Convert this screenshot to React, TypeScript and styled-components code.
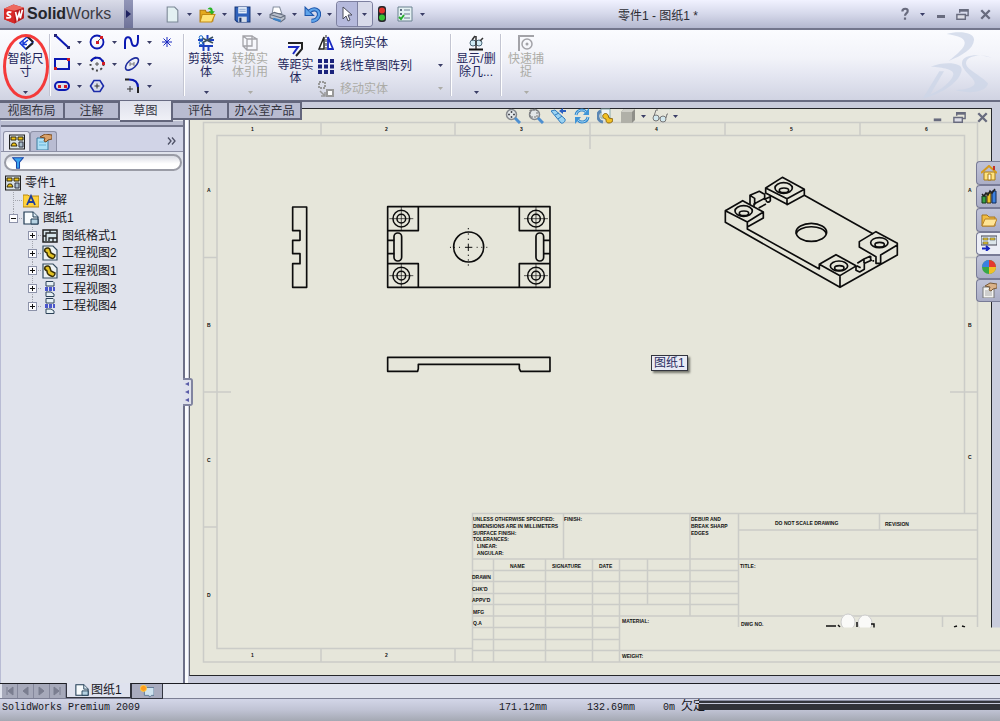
import React from "react";
import styled, { createGlobalStyle } from "styled-components";

const navy = "#23265a";
const cjk = `"Liberation Sans", "Noto Sans CJK SC", sans-serif`;

const GlobalStyle = createGlobalStyle`
  * { box-sizing: border-box; }
  body { margin: 0; background: #cdd0e0; font: 12px/14px ${cjk}; color: #16161c; }
  button { font: inherit; color: inherit; background: none; border: 0; padding: 0; margin: 0; }
  ul { list-style: none; margin: 0; padding: 0; }
  svg { display: block; }
`;

/* ---------- shell ---------- */

const Shell = styled.div`
  display: flex;
  flex-direction: column;
  min-height: 100vh;
  overflow: hidden;
`;

const TitleBar = styled.header`
  display: flex;
  align-items: center;
  height: 30px;
  background: linear-gradient(#f1f2ff, #d5d8ea 50%, #b4b8cf);
  border-bottom: 2px solid #73768c;
`;

const Brand = styled.div`
  display: flex;
  align-items: center;
  width: 124px;
  height: 28px;
  padding-left: 3px;
  gap: 2px;
  background: linear-gradient(#d9dbe8, #a9adc4);
  font-size: 16px;
  line-height: 20px;
  color: #3c3c44;
  b { color: #25252b; }
`;

const BrandToggle = styled.button`
  display: grid;
  place-items: center;
  width: 9px;
  height: 28px;
  background: linear-gradient(#9296b8, #6f7399);
  margin-right: 29px;
`;

const ToolButton = styled.button<{ $w?: number }>`
  display: grid;
  place-items: center;
  width: ${(p) => p.$w ?? 20}px;
  height: 22px;
  flex: none;
`;

const SelectFrame = styled.div`
  display: flex;
  height: 24px;
  width: 35px;
  align-items: center;
  border-radius: 3px;
  box-shadow: 0 0 0 1px #7d80a0;
  background: linear-gradient(90deg, #b5b9dc 20px, #7d80a0 20px, #7d80a0 21px, #d9dbea 21px);
`;

const DocTitle = styled.h1`
  flex: 1;
  margin: 0;
  padding: 3px 6px 0 0;
  text-align: center;
  font: 12px/16px ${cjk};
  color: #2c2c33;
`;

const Controls = styled.div`
  display: flex;
  align-items: center;
  padding-right: 4px;
`;

/* ---------- ribbon ---------- */

const Ribbon = styled.div`
  position: relative;
  display: flex;
  height: 72px;
  padding-left: 2px;
  background: linear-gradient(#fbfcff, #f2f3f9 40%, #e4e6f1 65%, #d0d3e2);
  border-bottom: 2px solid #686b82;
`;

const Divider = styled.div`
  width: 2px;
  margin: 4px 0;
  background: linear-gradient(90deg, #c3c5d2 1px, #fff 1px);
`;

const BigTool = styled.button<{ $w: number; $low?: boolean; $off?: boolean }>`
  position: relative;
  display: flex;
  flex-direction: column;
  align-items: center;
  width: ${(p) => p.$w}px;
  height: 68px;
  padding-top: ${(p) => (p.$low ? 11 : 5)}px;
  line-height: 13px;
  color: ${(p) => (p.$off ? "#acaca6" : navy)};
  > span { width: 40px; margin-top: 2px; }
  > span + svg { margin-top: auto; margin-bottom: 4px; }
`;

const HighlightRing = styled.i`
  position: absolute;
  inset: 4px 0 -1px 1px;
  border: 3px solid #f43a3a;
  border-radius: 50%;
`;

const SketchGrid = styled.div`
  display: grid;
  grid-template-columns: repeat(3, 20px 15px) 26px;
  grid-template-rows: repeat(3, 22px);
  padding: 1px 0 0 1px;
`;

const StackTools = styled.div`
  display: grid;
  grid-template-columns: 22px 90px 20px;
  grid-template-rows: repeat(3, 23px);
  align-items: center;
  padding: 1px 0 0;
`;

const StackLabel = styled.button<{ $off?: boolean }>`
  text-align: left;
  color: ${(p) => (p.$off ? "#acaca6" : navy)};
`;

const RibbonLogo = styled.div`
  position: absolute;
  right: 8px;
  top: 0;
`;

/* ---------- main region ---------- */

const Main = styled.main`
  position: relative;
  display: flex;
  flex: 1;
  background: #c9ccdc;
`;

const CommandTabs = styled.nav`
  position: absolute;
  z-index: 2;
  left: 0;
  top: -1px;
  display: flex;
  align-items: flex-start;
`;

const CommandTab = styled.button<{ $w: number; $active?: boolean }>`
  width: ${(p) => p.$w}px;
  height: ${(p) => (p.$active ? 21 : 19)}px;
  border: 2px solid #63667c;
  border-left-width: 0;
  border-top-width: ${(p) => (p.$active ? 0 : 2)}px;
  background: ${(p) => (p.$active ? "linear-gradient(#dfe1ec, #eff0f6)" : "#b8bbd0")};
  color: #33343f;
`;

const Panel = styled.aside`
  display: flex;
  flex-direction: column;
  width: 185px;
  padding-top: 19px;
  border-right: 2px solid #6d7088;
  border-left: 1px solid #b9bcd4;
  background: #e0e3ec;
`;

const PanelHeader = styled.div`
  display: flex;
  align-items: flex-end;
  height: 31px;
  padding: 0 6px 0 2px;
  background: linear-gradient(#b9bcd0 4px, #73768c 4px, #73768c 6px, #d1d4e7 6px);
  border-bottom: 1px solid #8d90a6;
`;

const PanelTab = styled.button<{ $active?: boolean }>`
  display: grid;
  place-items: center;
  width: 27px;
  height: 20px;
  border: 1px solid #8d90a6;
  border-bottom: 0;
  border-radius: 3px 3px 0 0;
  background: ${(p) => (p.$active ? "#e8e9f2" : "#b9bcd2")};
`;

const Chevron = styled.button`
  display: grid;
  place-items: center;
  width: 11px;
  height: 20px;
  margin-left: auto;
`;

const Filter = styled.label`
  display: flex;
  align-items: center;
  height: 17px;
  margin: 2px 1px 3px 3px;
  padding-left: 6px;
  gap: 4px;
  border: 2px solid #9a9ca6;
  border-radius: 9px;
  background: linear-gradient(#d9dbe4, #fff 60%);
  input { flex: 1; min-width: 0; border: 0; background: none; outline: 0; font: inherit; height: 12px; padding: 0; }
`;

const Tree = styled.ul`
  display: grid;
  grid-template-rows: repeat(8, 1fr);
  height: 141px;
`;

const TreeRow = styled.li<{ $level: number }>`
  display: flex;
  align-items: stretch;
  padding-left: ${(p) => (p.$level === 0 ? 4 : p.$level === 1 ? 3 : 22)}px;
  white-space: nowrap;
  > svg { align-self: center; margin-right: 4px; }
  > span { align-self: center; }
`;

const Guide = styled.div<{ $last?: boolean }>`
  display: grid;
  place-items: center;
  width: 19px;
  background:
    repeating-linear-gradient(#a3a5ad 0 1px, transparent 1px 2px) 9px 0 / 1px ${(p) => (p.$last ? "50%" : "100%")} no-repeat,
    repeating-linear-gradient(90deg, #a3a5ad 0 1px, transparent 1px 2px) 9px 50% / 10px 1px no-repeat;
`;

const Expander = styled.button`
  display: grid;
  place-items: center;
  width: 9px;
  height: 9px;
  border: 1px solid #8d93aa;
  background: #fbfbfd;
`;

const Splitter = styled.div`
  position: relative;
  width: 4px;
  background: linear-gradient(90deg, #fafbfd 3px, #c9ccdc 3px);
`;

const SplitHandle = styled.button`
  position: absolute;
  z-index: 1;
  top: 276px;
  left: -2px;
  display: grid;
  place-items: center;
  width: 10px;
  height: 28px;
  border: 2px solid #8184a0;
  border-left: 0;
  border-radius: 0 3px 3px 0;
  background: #dfe1ec;
`;

const Workspace = styled.section`
  display: flex;
  flex: 1;
  min-width: 0;
  padding: 6px 8px 7px 0;
`;

const Sheet = styled.div`
  position: relative;
  flex: 1;
  min-width: 0;
  border: 1px solid #26272b;
  border-left-color: #60626c;
  background: #e6e6da;
`;

const ViewBar = styled.div`
  position: absolute;
  inset: -4px 0 auto;
  display: flex;
  align-items: center;
  justify-content: center;
`;

const SheetControls = styled.div`
  position: absolute;
  top: -3px;
  right: -2px;
  display: flex;
`;

const SheetTip = styled.div`
  position: absolute;
  left: 461px;
  top: 246px;
  padding: 0 2px;
  border: 1px solid #33353f;
  background: #e9ebf5;
  color: #2b2d60;
  line-height: 14px;
  box-shadow: 2px 2px 2px #77786f;
`;

const TaskPane = styled.nav`
  position: absolute;
  z-index: 2;
  right: 0;
  top: 59px;
  display: grid;
  grid-template-rows: repeat(6, 1fr);
  height: 141px;
  width: 24px;
`;

const TaskButton = styled.button<{ $active?: boolean }>`
  display: grid;
  place-items: center;
  border: 1px solid #787b96;
  border-right: 0;
  border-radius: 4px 0 0 4px;
  background: ${(p) => (p.$active ? "#eceef6" : "linear-gradient(#c0c3d8, #abaec6)")};
`;

/* ---------- footer ---------- */

const SheetTabs = styled.nav`
  display: flex;
  height: 16px;
  padding-left: 2px;
  border-top: 1px solid #1d1e23;
  border-bottom: 1px solid #7c7f94;
  background: #e1e4ee;
`;

const NavButton = styled.button`
  display: grid;
  place-items: center;
  width: 16px;
  background: #a6a9ba;
  border-right: 1px solid #85889c;
`;

const SheetTab = styled.button<{ $active?: boolean }>`
  display: flex;
  align-items: center;
  gap: 2px;
  height: 15px;
  padding: 0 8px;
  border: 1px solid #33353f;
  border-top: 0;
  background: ${(p) => (p.$active ? "#dfe2ee" : "#a9acbf")};
  margin-top: ${(p) => (p.$active ? -1 : 0)}px;
`;

const StatusBar = styled.footer`
  position: relative;
  display: flex;
  height: 22px;
  padding: 1px 0 0 2px;
  background: linear-gradient(#d3d6e8, #c0c3d4 50%, #a4a8b3);
  font: 10px/15px "Liberation Mono", "Noto Sans CJK SC", monospace;
  white-space: pre;
`;

const StatusGroup = styled.div`
  display: flex;
  margin-left: auto;
  width: 501px;
`;

const StatusCell = styled.span<{ $w: number }>`
  width: ${(p) => p.$w}px;
  big { font-size: 12px; }
`;

const DarkStrip = styled.div`
  position: absolute;
  right: 0;
  top: 1px;
  width: 301px;
  height: 10px;
  background: linear-gradient(#8c90a4 1px, #33353c 1px, #33353c 3px, #c4c8d8 3px, #c4c8d8 4px, #303238 4px);
`;

/* ---------- icons ---------- */

const Caret = ({ c = "#3a3d66" }: { c?: string }) => (
  <svg width="5" height="3" viewBox="0 0 5 3"><path d="M0 0h5L2.500 3z" fill={c} /></svg>
);

const shapes: Record<string, React.ReactNode> = {
  page: <path d="M3 1h7l3 3v11H3z" fill="#e3f0f2" stroke="#7b8795" />,
  open: <><path d="M1 4h5l1 2h6v8H1z" fill="#e5a91e" stroke="#b47b0c" /><path d="M3 8h12l-3 7H1z" fill="#ffe276" stroke="#c38a12" /><path d="M8 3c3-3 5-1 5 2h2l-3 3-3-3h2c0-2-1-2-3-2z" fill="#28b424" /></>,
  save: <><path d="M1 1h14v14H3l-2-2z" fill="#2f62bb" stroke="#173778" /><path d="M4 1h8v6H4z" fill="#e8f1fb" /><path d="M5 3h6M5 5h6" stroke="#8ca7cd" /><path d="M4 10h8v5H4z" fill="#d5dce8" /><path d="M5 11h2v4H5z" fill="#183469" /></>,
  print: <><path d="M3 7l1-6h6l2 6z" fill="#fff" stroke="#8690a0" /><path d="M1 8l4-2 10 3v3l-4 3-10-4z" fill="#b9c0cc" stroke="#636c7d" /><path d="M1 8l10 3 4-2" stroke="#636c7d" fill="none" /><path d="M4 12l7 2" stroke="#3b82c9" strokeWidth="2" /></>,
  undo: <><path d="M5 5c5-4 10-1 9 4-1 3-3 5-7 5" fill="none" stroke="#1e57ad" strokeWidth="4" /><path d="M1 1v8h8z" fill="#5fa4ea" stroke="#1e57ad" /><path d="M5 5c5-4 10-1 9 4-1 3-3 5-7 5" fill="none" stroke="#5fa4ea" strokeWidth="2" /></>,
  cursor: <path d="M4 1v12l3-3 2 5 2-1-2-5h4z" fill="#fff" stroke="#4b4d5c" />,
  traffic: <><rect x="4" y="0" width="8" height="16" rx="3" fill="#27282b" /><circle cx="8" cy="4.500" r="3" fill="#e3322b" /><circle cx="8" cy="11.500" r="3" fill="#35c231" /></>,
  list: <><path d="M1 1h14v14H1z" fill="#e4f1f2" stroke="#6b8190" /><path d="M7 4h6M7 8h6M7 12h6" stroke="#6b7d90" /><path d="M3 4h2M3 8h2" stroke="#5b6d80" strokeWidth="2" /><path d="M2 11l2 2 3-4" fill="none" stroke="#25ad2b" strokeWidth="2" /></>,
  help: <path d="M5 5c0-4 7-4 6 0 0 2-3 2-3 5M8 12v2.500" fill="none" stroke="#686b7e" strokeWidth="2.500" />,
  min: <path d="M4 10.500h8" stroke="#686b7e" strokeWidth="3" />,
  restore: <><path d="M5 6V3h9v6h-3" fill="none" stroke="#686b7e" strokeWidth="1.500" /><path d="M5 4h9" stroke="#686b7e" strokeWidth="2" /><path d="M2 8h9v5H2z" fill="#dcdde6" stroke="#686b7e" strokeWidth="1.500" /></>,
  close: <path d="M3.500 3.500l9 9m0-9l-9 9" stroke="#686b7e" strokeWidth="2.500" />,
  dim: <><path d="M2 8l7-6 6 5-7 7z" fill="#fff" stroke="#1539d8" strokeWidth="1.600" /><path d="M9 1l6 6" stroke="#222" strokeWidth="2" /><path d="M5 9l5-4M5 6v3.500h4" stroke="#1539d8" strokeWidth="1.500" fill="none" /><path d="M8 14l7-6" stroke="#222" strokeWidth="2" /></>,
  line: <><path d="M1 1l14 13" stroke="#0a18b2" strokeWidth="2" /><path d="M0 0h3v3H0zM13 12h3v3h-3z" fill="#23247a" /></>,
  circle: <><circle cx="8" cy="8" r="6.500" fill="none" stroke="#0a18b2" strokeWidth="1.800" /><path d="M8 8l4-4" stroke="#555" /><path d="M7 7h3v3H7zM11 2h3v3h-3z" fill="#d01c26" /></>,
  spline: <path d="M1 15V8c0-6 5-6 6-2s1 6 4 6 3-4 3-7V1" fill="none" stroke="#0a18b2" strokeWidth="2" />,
  star: <path d="M8 3v10M3 8h10M4.500 4.500l7 7m0-7l-7 7" stroke="#1928c0" />,
  rect: <><path d="M1 3h14v10H1z" fill="none" stroke="#0a18b2" strokeWidth="2" /><path d="M13 2h3v3h-3zM0 11h3v3H0z" fill="#d01c26" /></>,
  arc: <><circle cx="8" cy="8" r="6.500" fill="none" stroke="#444" strokeWidth="2" strokeDasharray="2 2.500" /><path d="M2 5c3-5 10-4 12 1" fill="none" stroke="#0a18b2" strokeWidth="2" /><path d="M6 8h4M8 6v4" stroke="#555" /><path d="M13 6h3v3h-3z" fill="#d01c26" /></>,
  ellipse: <><ellipse cx="8" cy="8" rx="8" ry="4" transform="rotate(-42 8 8)" fill="none" stroke="#1e2d9e" strokeWidth="1.600" /><path d="M6 6v4M6 8h4M10 6v4" stroke="#777" /></>,
  slot: <><rect x="1" y="4" width="14" height="8" rx="4" fill="none" stroke="#0a18b2" strokeWidth="2" /><path d="M4 7h3v3H4zM10 7h3v3h-3z" fill="#d01c26" /></>,
  hex: <><path d="M5 2.500h6l3.500 5.500-3.500 5.500H5L1.500 8z" fill="none" stroke="#1a2aa8" strokeWidth="1.600" /><path d="M5.500 8h5M8 5.500v5" stroke="#333" /></>,
  fillet: <><path d="M1 1.500h4" stroke="#222" strokeWidth="2" /><path d="M5 1.500c7 0 9 4 9 8" fill="none" stroke="#0a18b2" strokeWidth="2" /><path d="M14 9v6" stroke="#222" strokeWidth="2" /><path d="M3 11h6M6 8v6" stroke="#333" /></>,
  trim: <><path d="M0 5h5M11 5h5M1 11h14M5.500 8v8M10.500 11v5M9.500 0v4" stroke="#1c40c0" strokeWidth="2" /><path d="M4 3l11 5M4 8l11-6" stroke="#3a5060" strokeWidth="1.500" /><circle cx="3" cy="2.500" r="1.800" fill="none" stroke="#1c6cc8" /><circle cx="3" cy="8" r="1.800" fill="none" stroke="#1c6cc8" /></>,
  convert: <><path d="M1 1h9v10H1zM5 4h10v11H5zM1 1l4 3M10 1l5 3M1 11l4 4" fill="none" stroke="#a3a3a8" strokeWidth="1.300" /></>,
  offset: <><path d="M0 2h14v6l-6 7" fill="none" stroke="#222" strokeWidth="2" /><path d="M0 6h10l-5 7" fill="none" stroke="#1928c0" strokeWidth="2" /></>,
  mirror: <><path d="M1 14L6 2v12z" fill="#fff" stroke="#222" strokeWidth="1.500" /><path d="M15 14L10 2v12z" fill="#fff" stroke="#1928c0" strokeWidth="1.800" /><path d="M8 0v16" stroke="#222" strokeDasharray="3 1" /></>,
  pattern: <path d="M0 1h4v4H0zM6 1h4v4H6zM12 1h4v4h-4zM0 6.500h4v4H0zM6 6.500h4v4H6zM12 6.500h4v4h-4zM0 12h4v4H0zM6 12h4v4H6zM12 12h4v4h-4z" fill="#1b237c" />,
  move: <><path d="M1 1h6v6H1z" fill="none" stroke="#999" strokeWidth="2" strokeDasharray="2 1" /><path d="M9 9h6v6H9z" fill="#fff" stroke="#999" strokeWidth="2" /><path d="M2 10l5 5M7 11v4H3" stroke="#999" fill="none" strokeWidth="1.500" /></>,
  relations: <><path d="M1 14.500h14" stroke="#111" strokeWidth="2" /><circle cx="5" cy="8" r="3" fill="#cfeaf5" stroke="#4a6577" /><circle cx="11" cy="8" r="3" fill="#cfeaf5" stroke="#4a6577" /><path d="M8 1v13M4 5l3-4M12 6l3-3" stroke="#333" strokeWidth="1.500" /></>,
  snap: <><path d="M1 16V1h15" fill="none" stroke="#a3a3a8" strokeWidth="2" /><circle cx="9" cy="9" r="5" fill="none" stroke="#a3a3a8" strokeWidth="1.500" /><circle cx="9" cy="9" r="1.500" fill="#a3a3a8" /></>,
  zoomFit: <><circle cx="6.500" cy="6.500" r="5" fill="#e2e6e8" stroke="#86898e" strokeWidth="1.500" /><path d="M6.500 3v7M3 6.500h7" stroke="#4b4e55" strokeWidth="1.500" strokeDasharray="2 3" /><path d="M10 10l5 5" stroke="#4d8fd0" strokeWidth="3" /></>,
  zoomArea: <><circle cx="6.500" cy="6.500" r="5" fill="#e2e6e8" stroke="#86898e" strokeWidth="1.500" /><path d="M2 2h7v7H2z" fill="none" stroke="#777" strokeDasharray="2 1" /><path d="M10 10l5 5" stroke="#4d8fd0" strokeWidth="3" /></>,
  zoomPrev: <><path d="M0 3l10 12c2 1 5-2 4-4L4 2z" fill="#9bd3f2" stroke="#2e7bbd" /><path d="M4 7l4-2M7 11l4-3" stroke="#2e7bbd" /><path d="M8 3l4-3v2h3v2h-3v2z" fill="#2a5fc0" /></>,
  rotate: <><path d="M2 7c1-6 8-6 10-3M14 9c-1 6-8 6-10 3" fill="none" stroke="#2f86cc" strokeWidth="3" /><path d="M2 7c1-6 8-6 10-3M14 9c-1 6-8 6-10 3" fill="none" stroke="#a9d8f5" /><path d="M15 0v7H9zM1 16V9h6z" fill="#3f95d8" /></>,
  view3d: <><path d="M4 1h9v9H4z" fill="#eef3f6" stroke="#8aa" /><path d="M6 14C0 13-1 5 4 3" fill="none" stroke="#5b87b4" strokeWidth="3" /><path d="M6 7c1-2 4-2 5 0l1 3 4 1c0 3-2 4-4 4-3 0-3-2-3-4-2 0-4-2-3-4z" fill="#f2c024" stroke="#8d6810" /></>,
  cube: <><path d="M1 4l3-3h11v11l-3 3H1z" fill="#8f8f89" /><path d="M1 4h11v11H1z" fill="#b0b0a8" /><path d="M1 4l3-3h11l-3 3z" fill="#cfcfc8" /></>,
  glasses: <><circle cx="4" cy="10" r="3" fill="#d2e8ee" stroke="#777" /><circle cx="11" cy="11" r="3" fill="#d2e8ee" stroke="#777" /><path d="M2 8l2-6 2 0M14 10l1-4 1 0M7 10h1" fill="none" stroke="#777" /></>,
  drawing: <><path d="M0.500 1h15v14H.5z" fill="#d9e2e6" stroke="#222" strokeWidth="1.200" /><path d="M2 3h5v3H2zM9 3h5v3H9z" fill="#f6c915" stroke="#33290a" /><path d="M2 12l1.500-3h3L8 12z" fill="#f6c915" stroke="#33290a" /><path d="M10 8h4v5h-4z" fill="#a9bdc9" stroke="#334" /></>,
  props: <><path d="M1 4h11v12H1z" fill="#aee0f6" stroke="#3f7da0" /><path d="M3 8h7M3 11h7" stroke="#65b2d8" /><path d="M4 3l5-3 7 1v4l-4 1-2 2-2-1 1-3z" fill="#d9a168" stroke="#7a4b1f" /></>,
  funnel: <path d="M1 1h14l-5 6v8H6V7z" fill="#39a4f0" stroke="#1a45a8" strokeWidth="1.400" />,
  note: <><path d="M0 3h5l1 1h10v11H0z" fill="#ffd23c" stroke="#b88711" /><path d="M4 13l4-9 4 9M5.500 10h5" fill="none" stroke="#1e3d9c" strokeWidth="1.800" /></>,
  sheet: <><path d="M1 2h9l5 5v7H1z" fill="#f7fbfd" stroke="#1e3a52" strokeWidth="1.200" /><path d="M8 9h7v5H8z" fill="#b6d2e2" stroke="#1e3a52" /><path d="M10 2v5h5" fill="#dceaf2" stroke="#1e3a52" /></>,
  format: <><path d="M1 2h14v12H1z" fill="#d6e4ea" stroke="#222" strokeWidth="1.500" /><path d="M4 13V5h10M7 13v-3h8M1 8h3M8 2v3M11 10v4" stroke="#222" strokeWidth="1.300" fill="none" /></>,
  viewPart: <><path d="M1 1h10l4 4v10H1z" fill="#edf2f4" stroke="#344c5f" strokeWidth="1.200" /><path d="M3 4c2-2 5-1 5 1l1 3 4 2c0 3-2 4-4 3-3-1-4-3-4-5-2-1-3-2-2-4z" fill="#e2c222" stroke="#3a3108" strokeWidth="1.500" /></>,
  viewProj: <><path d="M4 .5h7l1 1V5H4zM4 11h5l3 2v2.500H4z" fill="#e6f0f4" stroke="#2c4258" /><path d="M3 7h10M3 9h10" stroke="#1928c0" strokeWidth="1.500" strokeDasharray="3 1" /></>,
  home: <><path d="M3 7h11v8H3z" fill="#ffe37d" stroke="#a87a17" /><path d="M0 8l8-7 8 7" fill="none" stroke="#d59a1c" strokeWidth="2" /><path d="M12 1h2v4h-2z" fill="#c33228" /><path d="M7 9h3v6H7z" fill="#fffbe4" stroke="#a87a17" /></>,
  library: <><path d="M1 8h4v7H1z" fill="#37a043" stroke="#13381a" /><path d="M6 5h4v10H6z" fill="#f0c32b" stroke="#3c300a" /><path d="M11 3h4v12h-4z" fill="#3c80dc" stroke="#122c5b" /><path d="M1 6l2 2 2-3 2 2 2-4 2 2 3-4" fill="none" stroke="#222" strokeWidth="1.500" /></>,
  folder: <><path d="M1 3h5l2 2h6v9H1z" fill="#f1bc42" stroke="#a8761c" /><path d="M4 7h12l-3 7H1z" fill="#ffe596" stroke="#b8842a" /></>,
  palette: <><path d="M0 1h16v9H0z" fill="#dbe5ea" stroke="#445" /><path d="M2 3h5v2H2zM2 7h5v2H2zM9 3h5v2H9z" fill="#f2cd2a" stroke="#554" strokeWidth=".6" /><path d="M1 13.500h6M5 11l3 2.500L5 16" stroke="#1526c0" strokeWidth="1.800" fill="none" /></>,
  sphere: <><circle cx="8" cy="8" r="7" fill="#39a845" /><path d="M8 8V1a7 7 0 0 1 7 7z" fill="#e43a31" /><path d="M8 8v7a7 7 0 0 0 7-7z" fill="#f2bf28" /><path d="M8 8V1a7 7 0 0 0-7 7z" fill="#3c7fe0" /></>,
  custom: <><path d="M2 5h11v11H2z" fill="#f2f2f0" stroke="#777" /><path d="M4 9h7M4 11h7M4 13h7" stroke="#aaa" /><path d="M4 4l5-3 7 1v4l-4 1-2 2-2-1 1-3z" fill="#d9b188" stroke="#7a5b3a" /></>,
  addSheet: <><path d="M5 4h11v9h-3l-2 2-1-2H5z" fill="#cfe3ef" stroke="#587490" /><circle cx="4" cy="5" r="3.500" fill="#ff9b1c" stroke="#ffd24a" /></>,
};

const Icon = ({ n, s = 16 }: { n: string; s?: number }) => (
  <svg width={s} height={s} viewBox="0 0 16 16" aria-hidden="true">{shapes[n]}</svg>
);

const BrandMark = () => (
  <svg width="22" height="22" viewBox="0 0 21 20">
    <path d="M1 5l9-4 10 3v10l-9 5-10-4z" fill="#b81a1c" />
    <path d="M1 5l10 2v12L1 15z" fill="#d92a28" />
    <path d="M1 5l9-4 10 3-9 3z" fill="#ee6a5f" />
    <path d="M8 8.500C4 7 3 10 5.500 11S8 14.500 3 13.500" fill="none" stroke="#fff" strokeWidth="1.800" />
    <path d="M12 8l1.500 7L15.500 9l1 5L18.500 6" fill="none" stroke="#fff" strokeWidth="1.600" />
  </svg>
);

const DassaultMark = () => (
  <svg width="70" height="70" viewBox="1110 90 210 210" fill="#cdd6e8" opacity=".75">
    <path d="M1184 102c30-10 84-8 82 18-2 28-36 46-76 63 30-24 50-42 48-56-2-16-26-20-54-25z" />
    <path fillRule="evenodd" d="M1136 200c40-16 96-14 93 10-5 36-60 72-117 86l50-82h14l-42 70c32-14 66-40 70-60 3-16-30-22-68-24z" />
    <path d="M1320 174c-26-14-76-8-78 14-2 20 46 38 66 62-4 24-48 34-98 20 34 0 56-8 58-20 2-16-40-38-38-62 2-24 50-28 90-14z" />
  </svg>
);

/* ---------- drawing sheet content ---------- */

const FrameLine = styled.path`
  fill: none;
  stroke: #cbccc8;
  stroke-width: 1.5;
`;

const Outline = styled.g`
  fill: none;
  stroke: #0c0c0c;
  stroke-width: 5;
  stroke-linejoin: round;
`;

const TinyText = styled.text`
  font: bold 5px "Liberation Sans Narrow", "Liberation Sans", sans-serif;
  fill: #111;
`;

const Boss = ({ x, y }: { x: number; y: number }) => (
  <g>
    <circle cx={x} cy={y} r="25" strokeWidth="4.500" />
    <circle cx={x} cy={y} r="13" strokeWidth="4.500" />
    <path d={`M${x - 36} ${y}h72M${x} ${y - 36}v72`} strokeWidth="2" />
  </g>
);

const tiny: [number, number, string][] = [
  [473, 521, "UNLESS OTHERWISE SPECIFIED:"], [473, 528, "DIMENSIONS ARE IN MILLIMETERS"],
  [473, 535, "SURFACE FINISH:"], [473, 541, "TOLERANCES:"], [477, 548, "LINEAR:"], [477, 555, "ANGULAR:"],
  [564, 521, "FINISH:"], [691, 521, "DEBUR AND"], [691, 528, "BREAK SHARP"], [691, 535, "EDGES"],
  [775, 525, "DO NOT SCALE DRAWING"], [885, 526, "REVISION"], [510, 568, "NAME"], [552, 568, "SIGNATURE"],
  [599, 568, "DATE"], [740, 568, "TITLE:"], [472, 579, "DRAWN"], [472, 591, "CHK'D"], [472, 602, "APPV'D"],
  [473, 614, "MFG"], [473, 625, "Q.A"], [622, 623, "MATERIAL:"], [741, 626, "DWG NO."], [622, 658, "WEIGHT:"],
  [251, 131, "1"], [385, 131, "2"], [520, 131, "3"], [655, 131, "4"], [790, 131, "5"], [925, 131, "6"],
  [251, 657, "1"], [385, 657, "2"], [207, 192, "A"], [207, 327, "B"], [207, 462, "C"], [207, 597, "D"],
  [968, 192, "A"], [968, 327, "B"], [968, 459, "C"],
];

const DrawingSvg = styled.svg`
  position: absolute;
  left: 0;
  top: 0;
  width: 100%;
  height: 100%;
  overflow: visible;
`;

const Drawing = () => (
  <DrawingSvg viewBox="190 109 801 566" preserveAspectRatio="xMinYMin meet">
    <FrameLine d="M977.500 627V122.500H203.500V662H1000M964.500 513V135.500H217V648.500H472M321 122v13.500M455 122v13.500M590 122v27M725 122v13.500M860 122v13.500M321 648v14M455 648v14M203 257.500h14M203 392h28M203 527h14M964 257.500h13M950 392h27" />
    <FrameLine d="M472.500 662V513.500H977.500M472.500 559H977.500M738.500 530H977.500M879.500 513v17M563.500 513v46M690 513v103M738.500 513v114M493.500 559v103M545.500 559v103M592.500 559v103M619.500 559v103M647.500 559v46M472 570.500h266.500M472 581.500h266.500M472 593.500h266.500M472 604.500h266.500M472 616h505M472 627.500h147M472 639.500h147M472 650.500H619.500M942.500 616v11" />
    <ellipse cx="848" cy="622" rx="7" ry="8" fill="#fafaf8" stroke="#ccc" />
    <ellipse cx="865" cy="623" rx="7" ry="8" fill="#fafaf8" stroke="#ccc" />
    <path d="M826 626h10M838 625l2 2M857 622v5M871 624h3v4M954 627l3-1M962 626l3 1" stroke="#111" strokeWidth="1.500" fill="none" />
    <path d="M740 627.500H1000V675H740z" fill="#e6e6da" />
    <path d="M990 675.500H1000" stroke="#26272b" />
    <FrameLine d="M619.500 650.500H1000M740 662H1000" />
    {tiny.map(([x, y, t]) => <TinyText key={`${x}-${y}`} x={x} y={y}>{t}</TinyText>)}

    <Outline transform="translate(270 190) scale(.3333)">
      <path d="M68 51h42v241H68v-71h22v-30H68v-40h22v-29H68z" />
      <path d="M353 50h487v242H353zM445 50v72h-92M353 221h92v71M748 50v72h92M840 221h-92v71M353 151h20M353 191h20M820 151h20M820 191h20" />
      <rect x="372" y="129" width="23" height="84" rx="11" />
      <rect x="798" y="129" width="23" height="84" rx="11" />
      <circle cx="596" cy="171" r="45" />
      <path d="M540 172h3M552 172h3M567 172h3M585 172h22M620 172h3M634 172h3M649 172h3M595 114v4M595 130v4M595 146v4M595 161v22M595 194v4M595 208v4M595 223v4" strokeWidth="3" />
      <Boss x={394} y={86} /><Boss x={798} y={86} /><Boss x={394} y={257} /><Boss x={798} y={257} />
      <path d="M353 502h487v42h-88l-4-8v-13H445v13l-2 8h-90z" />
    </Outline>

    <Outline transform="translate(700 160) scale(.3333)">
      <path d="M76 152l52-30 62 34v18l-48 27v-15L76 152v35l344 195 172-97v-35l-64-35-50 30v16l50 29v20h14v-25l50-30M142 186l48-30M142 201v6l216 120v-14l50-29 60 33M358 313l62 34v35M420 347l50-30" />
      <path d="M197 84l50-32 66 36v18l-52 28v-18L197 84v15l64 34M261 116l52-28M313 106l207 116" />
      <path d="M150 134v-28l28-12 16 9v12l-32 17v10M150 106l14 9v20M194 103v15l17-8v12c-6 8-14 4-12-3M176 144l22-12" />
      <path d="M468 317v14l11 5 14-8v-20M472 310l20-13 20-9M492 297v12M494 310l22-10M512 288v12M520 300v5M470 317l12 6" />
      <ellipse cx="334" cy="217" rx="46" ry="27" />
      <path d="M289 222c4-28 84-30 90 0" />
      <ellipse cx="251" cy="84" rx="26" ry="16" /><ellipse cx="252" cy="91" rx="14" ry="7" />
      <ellipse cx="131" cy="153" rx="26" ry="16" /><ellipse cx="132" cy="160" rx="14" ry="7" />
      <ellipse cx="538" cy="248" rx="26" ry="15" /><ellipse cx="539" cy="254" rx="14" ry="7" />
      <ellipse cx="417" cy="318" rx="26" ry="15" /><ellipse cx="418" cy="324" rx="14" ry="7" />
    </Outline>
  </DrawingSvg>
);

/* ---------- data ---------- */

const quickTools = ["page", "open", "save", "print", "undo"];
const sketchRows: string[][] = [["line", "circle", "spline"], ["rect", "arc", "ellipse"], ["slot", "hex", "fillet"]];
const treeRows: { level: number; icon: string; label: string; exp?: "+" | "-"; last?: boolean }[] = [
  { level: 0, icon: "drawing", label: "零件1" },
  { level: 1, icon: "note", label: "注解" },
  { level: 1, icon: "sheet", label: "图纸1", exp: "-", last: true },
  { level: 2, icon: "format", label: "图纸格式1", exp: "+" },
  { level: 2, icon: "viewPart", label: "工程视图2", exp: "+" },
  { level: 2, icon: "viewPart", label: "工程视图1", exp: "+" },
  { level: 2, icon: "viewProj", label: "工程视图3", exp: "+" },
  { level: 2, icon: "viewProj", label: "工程视图4", exp: "+", last: true },
];
const commandTabs: [string, number][] = [["视图布局", 65], ["注解", 55], ["草图", 53], ["评估", 56], ["办公室产品", 73]];
const navPaths = ["M3 1v8M9 1v8L4 5z", "M8 1v8L3 5z", "M3 1v8l5-4z", "M8 1v8M2 1v8l5-4z"];

export default function App() {
  return (
    <Shell>
      <GlobalStyle />
      <TitleBar>
        <Brand><BrandMark /><span><b>Solid</b>Works</span></Brand>
        <BrandToggle aria-label="菜单"><svg width="5" height="8" viewBox="0 0 5 8"><path d="M0 0v8l5-4z" fill="#1f2260" /></svg></BrandToggle>
        {quickTools.map((n) => (
          <React.Fragment key={n}>
            <ToolButton aria-label={n}><Icon n={n} s={17} /></ToolButton>
            <ToolButton $w={15} aria-label={`${n} options`}><Caret /></ToolButton>
          </React.Fragment>
        ))}
        <SelectFrame>
          <ToolButton aria-label="select"><Icon n="cursor" /></ToolButton>
          <ToolButton $w={15} aria-label="select options"><Caret /></ToolButton>
        </SelectFrame>
        <ToolButton aria-label="rebuild"><Icon n="traffic" /></ToolButton>
        <ToolButton $w={25} aria-label="options"><Icon n="list" /></ToolButton>
        <ToolButton $w={10} aria-label="more options"><Caret /></ToolButton>
        <DocTitle>零件1 - 图纸1 *</DocTitle>
        <Controls>
          <ToolButton aria-label="help"><Icon n="help" s={14} /></ToolButton>
          <ToolButton $w={15} aria-label="help options"><Caret /></ToolButton>
          <ToolButton $w={21} aria-label="minimize"><Icon n="min" /></ToolButton>
          <ToolButton $w={23} aria-label="restore"><Icon n="restore" s={15} /></ToolButton>
          <ToolButton $w={22} aria-label="close"><Icon n="close" s={15} /></ToolButton>
        </Controls>
      </TitleBar>

      <Ribbon>
        <BigTool $w={47}><Icon n="dim" /><span>智能尺寸</span><Caret /><HighlightRing /></BigTool>
        <Divider />
        <SketchGrid>
          {sketchRows.map((row, r) => (
            <React.Fragment key={r}>
              {row.map((n) => (
                <React.Fragment key={n}>
                  <ToolButton aria-label={n}><Icon n={n} /></ToolButton>
                  {n === "hex" ? <span /> : <ToolButton $w={15} aria-label={`${n} options`}><Caret /></ToolButton>}
                </React.Fragment>
              ))}
              {r === 0 ? <ToolButton aria-label="point"><Icon n="star" /></ToolButton> : <span />}
            </React.Fragment>
          ))}
        </SketchGrid>
        <Divider />
        <BigTool $w={42}><Icon n="trim" /><span>剪裁实体</span><Caret /></BigTool>
        <BigTool $w={46} $off><Icon n="convert" /><span>转换实体引用</span><Caret c="#acaca6" /></BigTool>
        <BigTool $w={45} $low><Icon n="offset" /><span>等距实体</span></BigTool>
        <StackTools>
          <Icon n="mirror" /><StackLabel>镜向实体</StackLabel><span />
          <Icon n="pattern" /><StackLabel>线性草图阵列</StackLabel><ToolButton aria-label="pattern options"><Caret /></ToolButton>
          <Icon n="move" /><StackLabel $off>移动实体</StackLabel><ToolButton aria-label="move options"><Caret c="#acaca6" /></ToolButton>
        </StackTools>
        <Divider />
        <BigTool $w={48}><Icon n="relations" /><span>显示/删除几...</span><Caret /></BigTool>
        <Divider />
        <BigTool $w={48} $off><Icon n="snap" /><span>快速捕捉</span><Caret c="#acaca6" /></BigTool>
        <RibbonLogo><DassaultMark /></RibbonLogo>
      </Ribbon>

      <Main>
        <CommandTabs>
          {commandTabs.map(([t, w]) => <CommandTab key={t} $w={w} $active={t === "草图"}>{t}</CommandTab>)}
        </CommandTabs>
        <Panel>
          <PanelHeader>
            <PanelTab $active aria-label="tree"><Icon n="drawing" /></PanelTab>
            <PanelTab aria-label="properties"><Icon n="props" /></PanelTab>
            <Chevron aria-label="more">
              <svg width="9" height="8" viewBox="0 0 9 8"><path d="M1 .5L4 4 1 7.500M5 .5L8 4 5 7.500" fill="none" stroke="#4d5065" strokeWidth="1.300" /></svg>
            </Chevron>
          </PanelHeader>
          <Filter><Icon n="funnel" s={12} /><input aria-label="filter" /></Filter>
          <Tree>
            {treeRows.map((r) => (
              <TreeRow key={r.label} $level={r.level}>
                {r.level > 0 && (
                  <Guide $last={r.last}>
                    {r.exp && (
                      <Expander aria-label={r.exp === "+" ? "expand" : "collapse"}>
                        <svg width="5" height="5" viewBox="0 0 5 5"><path d={r.exp === "+" ? "M0 2.500h5M2.500 0v5" : "M0 2.500h5"} stroke="#111" /></svg>
                      </Expander>
                    )}
                  </Guide>
                )}
                <Icon n={r.icon} /><span>{r.label}</span>
              </TreeRow>
            ))}
          </Tree>
        </Panel>
        <Splitter>
          <SplitHandle aria-label="collapse panel">
            <svg width="4" height="20" viewBox="0 0 4 20"><path d="M4 0v4L0 2zM4 8v4l-4-2zM4 16v4l-4-2z" fill="#5a5ca8" /></svg>
          </SplitHandle>
        </Splitter>
        <Workspace>
          <Sheet>
            <Drawing />
            <ViewBar>
              {["zoomFit", "zoomArea", "zoomPrev", "rotate", "view3d", "cube"].map((n) => (
                <ToolButton $w={23} key={n} aria-label={n}><Icon n={n} /></ToolButton>
              ))}
              <ToolButton $w={8} aria-label="display options"><Caret /></ToolButton>
              <ToolButton $w={24} aria-label="hide or show"><Icon n="glasses" /></ToolButton>
              <ToolButton $w={8} aria-label="hide options"><Caret /></ToolButton>
            </ViewBar>
            <SheetControls>
              <ToolButton $w={22} aria-label="minimize sheet"><Icon n="min" s={15} /></ToolButton>
              <ToolButton $w={23} aria-label="restore sheet"><Icon n="restore" s={15} /></ToolButton>
              <ToolButton $w={22} aria-label="close sheet"><Icon n="close" s={15} /></ToolButton>
            </SheetControls>
            <SheetTip role="tooltip">图纸1</SheetTip>
          </Sheet>
        </Workspace>
        <TaskPane>
          {["home", "library", "folder", "palette", "sphere", "custom"].map((n) => (
            <TaskButton key={n} $active={n === "palette"} aria-label={n}><Icon n={n} /></TaskButton>
          ))}
        </TaskPane>
      </Main>

      <SheetTabs>
        {navPaths.map((d) => (
          <NavButton key={d} aria-label="sheet navigation"><svg width="11" height="10" viewBox="0 0 11 10"><path d={d} fill="#7b7e90" stroke="#7b7e90" /></svg></NavButton>
        ))}
        <SheetTab $active><Icon n="sheet" s={14} />图纸1</SheetTab>
        <SheetTab aria-label="add sheet"><Icon n="addSheet" s={14} /></SheetTab>
      </SheetTabs>
      <StatusBar>
        <span>SolidWorks Premium 2009</span>
        <StatusGroup>
          <StatusCell $w={88}>171.12mm</StatusCell>
          <StatusCell $w={76}>132.69mm</StatusCell>
          <StatusCell $w={60}>0m <big>欠定</big></StatusCell>
        </StatusGroup>
        <DarkStrip />
      </StatusBar>
    </Shell>
  );
}
